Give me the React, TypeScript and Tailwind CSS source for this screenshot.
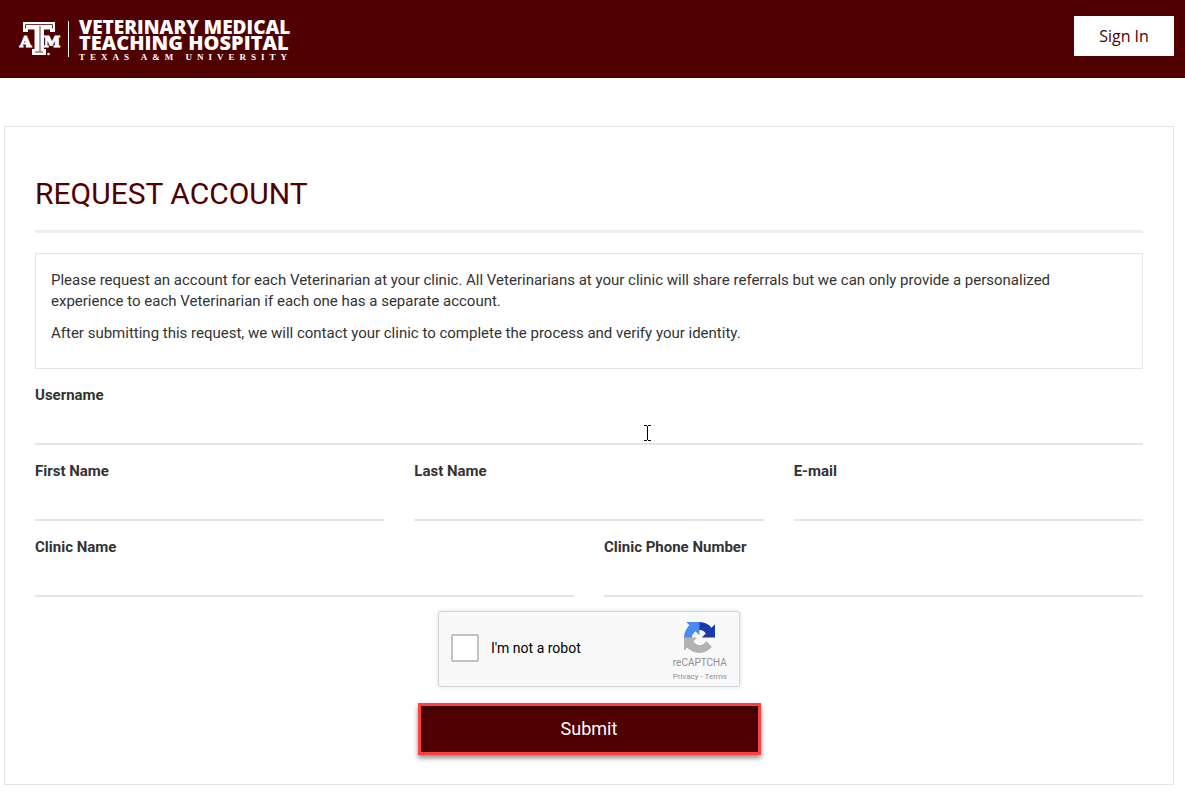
import { useState } from 'react';

interface FieldProps {
  id: string;
  label: string;
  type?: string;
}

const Field = ({ id, label, type = 'text' }: FieldProps) => (
  <div className="flex flex-1 flex-col pt-4">
    <label htmlFor={id} className="text-[15px] leading-5 font-bold text-[#333333]">
      {label}
    </label>
    <input
      id={id}
      type={type}
      className="h-10 w-full border-b-2 border-[#e5e5e5] bg-transparent text-[15px] outline-none"
    />
  </div>
);

const UniversityMark = () => (
  <svg width="42" height="36" viewBox="0 0 42 36" aria-hidden="true">
    <g fill="#fff">
      <rect x="4" y="1" width="32" height="7.5" />
      <rect x="4" y="1" width="5" height="10" />
      <rect x="31" y="1" width="5" height="10" />
      <rect x="15.5" y="1" width="9.5" height="33" />
      <rect x="13" y="28" width="14" height="6" />
      <circle cx="29.5" cy="33" r="1.3" />
    </g>
    <path
      d="M6.5 7.5V3.5H33.5V7.5M21 5V30.5M16 31H24"
      fill="none"
      stroke="#500000"
      strokeWidth="0.8"
    />
    <g
      fill="#fff"
      stroke="#fff"
      strokeWidth="1.1"
      fontFamily="'DejaVu Serif', serif"
      fontSize="15"
      fontWeight="700"
      textAnchor="middle"
    >
      <text x="6.5" y="26">
        A
      </text>
      <text x="33" y="26">
        M
      </text>
    </g>
  </svg>
);

const Header = () => (
  <header className="flex h-[78px] items-center justify-between bg-[#500000] pr-[11px] pl-[19px]">
    <a href="#" className="flex items-center text-white">
      <UniversityMark />
      <span className="mr-2.5 ml-[7px] h-9 w-px bg-white" />
      <span className="flex flex-col pt-1">
        <span className="font-['Open_Sans'] text-[19px] leading-4 font-extrabold">
          VETERINARY MEDICAL
        </span>
        <span className="font-['Open_Sans'] text-[20px] leading-4 font-extrabold">
          TEACHING HOSPITAL
        </span>
        <span className="font-['Liberation_Serif'] text-[9px] leading-3 font-bold tracking-[5px]">
          TEXAS A&amp;M UNIVERSITY
        </span>
      </span>
    </a>
    <button
      type="button"
      className="mb-1.5 h-10 w-[100px] bg-white font-['Open_Sans'] text-base text-[#500000]"
    >
      Sign In
    </button>
  </header>
);

const RecaptchaLogo = () => (
  <svg width="31" height="31" viewBox="0 0 64 64" aria-hidden="true">
    <path
      fill="#1c3aa9"
      d="M64 31.955l-.033-1.37V4.687l-7.16 7.16C50.948 4.674 42.033.093 32.05.093c-10.4 0-19.63 4.96-25.474 12.64l11.736 11.86a15.55 15.55 0 0 1 4.754-5.334c2.05-1.6 4.952-2.906 8.968-2.906.485 0 .86.057 1.135.163 4.976.393 9.288 3.14 11.828 7.124l-8.307 8.307L64 31.953"
    />
    <path
      fill="#4a8af4"
      d="M31.862.094l-1.37.033H4.594l7.16 7.16C4.58 13.147 0 22.06 0 32.046c0 10.4 4.96 19.63 12.64 25.474L24.5 45.784a15.55 15.55 0 0 1-5.334-4.754c-1.6-2.05-2.906-4.952-2.906-8.968 0-.485.057-.86.163-1.135.393-4.976 3.14-9.288 7.124-11.828l8.307 8.307L31.86.095"
    />
    <path
      fill="#b2b2b2"
      d="M.001 32.045l.033 1.37v25.898l7.16-7.16c5.86 7.173 14.774 11.754 24.76 11.754 10.4 0 19.63-4.96 25.474-12.64l-11.736-11.86a15.55 15.55 0 0 1-4.754 5.334c-2.05 1.6-4.952 2.906-8.968 2.906-.485 0-.86-.057-1.135-.163-4.976-.393-9.288-3.14-11.828-7.124l8.307-8.307C16.792 32.09 4.91 32.1 0 32.043"
    />
  </svg>
);

const Recaptcha = () => {
  const [checked, setChecked] = useState(false);

  return (
    <div className="flex h-[76px] w-[302px] items-center rounded-[3px] border border-[#d3d3d3] bg-[#f9f9f9] px-3 pb-0.5 shadow-[0_0_4px_1px_rgba(0,0,0,0.08)]">
      <input
        id="robot"
        type="checkbox"
        checked={checked}
        onChange={(e) => setChecked(e.target.checked)}
        className="size-7 appearance-none rounded-[2px] border-2 border-[#c1c1c1] bg-white checked:bg-[#4a8af4]"
      />
      <label htmlFor="robot" className="ml-3 text-sm text-black">
        I&apos;m not a robot
      </label>
      <div className="ml-auto flex flex-col items-center pt-2 text-[#8f8f8f]">
        <RecaptchaLogo />
        <span className="mt-1 text-[10px] leading-3">reCAPTCHA</span>
        <span className="mt-[3px] text-[8px] leading-[10px]">
          <a href="#">Privacy</a> - <a href="#">Terms</a>
        </span>
      </div>
    </div>
  );
};

const App = () => (
  <div className="min-h-screen bg-white font-['Roboto',sans-serif] text-[#333333]">
    <Header />
    <main className="relative mt-12 mr-[11px] mb-2 ml-1 border border-[#e5e5e5] px-[30px] pt-[51px] pb-[29px]">
      <h1 className="border-b-3 border-[#eeeeee] pb-5 text-[30px] leading-8 text-[#500000]">
        REQUEST ACCOUNT
      </h1>
      <div className="mt-5 border border-[#e5e5e5] pt-4 pr-16 pb-6 pl-[15px] text-[15px] leading-[21px]">
        <p>
          Please request an account for each Veterinarian at your clinic. All Veterinarians at your
          clinic will share referrals but we can only provide a personalized experience to each
          Veterinarian if each one has a separate account.
        </p>
        <p className="mt-[11px]">
          After submitting this request, we will contact your clinic to complete the process and
          verify your identity.
        </p>
      </div>
      <form onSubmit={(e) => e.preventDefault()}>
        <div className="flex">
          <Field id="username" label="Username" />
        </div>
        <div className="flex gap-[30px]">
          <Field id="firstName" label="First Name" />
          <Field id="lastName" label="Last Name" />
          <Field id="email" label="E-mail" type="email" />
        </div>
        <div className="flex gap-[30px]">
          <Field id="clinicName" label="Clinic Name" />
          <Field id="clinicPhone" label="Clinic Phone Number" type="tel" />
        </div>
        <div className="mt-3.5 flex flex-col items-center gap-4">
          <Recaptcha />
          <button
            type="submit"
            className="h-[52px] w-[343px] border-3 border-[#ff4040] bg-[#500000] text-lg text-white shadow-[0_3px_5px_rgba(0,0,0,0.45),inset_0_3px_6px_rgba(0,0,0,0.4)]"
          >
            Submit
          </button>
        </div>
      </form>
      {/* text cursor */}
      <svg
        className="pointer-events-none absolute top-[298px] left-[639px]"
        width="7"
        height="16"
        viewBox="0 0 7 16"
        aria-hidden="true"
      >
        <path
          d="M0 .5H3M4 .5H7M3.5 1V15M0 15.5H3M4 15.5H7"
          fill="none"
          stroke="#000"
          shapeRendering="crispEdges"
        />
      </svg>
    </main>
  </div>
);

export default App;
